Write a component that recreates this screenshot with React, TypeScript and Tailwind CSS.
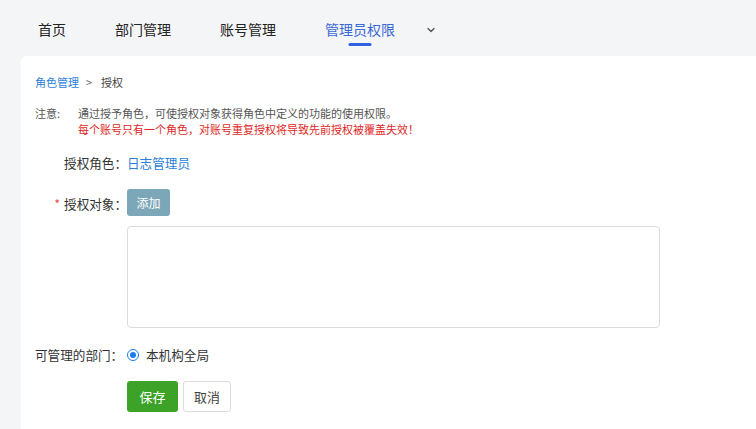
import React from 'react';

const font = { fontFamily: '"Noto Sans CJK SC", "Noto Sans", sans-serif' };

const navItems = ['首页', '部门管理', '账号管理', '管理员权限'];

const App: React.FC = () => {
  const active = 3;

  return (
    <div className="min-h-screen w-full bg-[#f4f5f7] flex flex-col" style={font}>
      {/* top tabs */}
      <nav className="h-[56px] shrink-0 flex items-center pl-[38px] text-[14px] text-[#222]">
        {navItems.map((item, i) => (
          <div
            key={item}
            className={`relative h-full flex items-center pt-[2px] ${i === navItems.length - 1 ? 'mr-[31px]' : 'mr-[49px]'}`}
          >
            <span className={i === active ? 'text-[#3a67d8]' : ''}>{item}</span>
            {i === active && (
              <span className="absolute left-1/2 -translate-x-1/2 top-[43px] w-[23px] h-[3px] bg-[#2f62e0] rounded-sm"></span>
            )}
          </div>
        ))}
        <svg width="10" height="10" viewBox="0 0 10 10" className="mt-[3px]">
          <path d="M2 3.5 L5 6.5 L8 3.5" fill="none" stroke="#555" strokeWidth="1.3" strokeLinecap="round" strokeLinejoin="round" />
        </svg>
      </nav>

      {/* content panel */}
      <div className="flex-1 ml-[21px] bg-white rounded-tl-[6px] pl-[14px] pt-[18px] pb-6">
        <div className="flex items-center text-[11px] text-[#444] h-[16px]">
          <span className="text-[#2b7fd8]">角色管理</span>
          <span className="ml-[7px] text-[#666]">&gt;</span>
          <span className="ml-[9px]">授权</span>
        </div>

        <div className="mt-[15px] flex text-[11px] leading-[16px]">
          <span className="w-[43px] text-[#555]">注意:</span>
          <div>
            <div className="text-[#555]">通过授予角色，可使授权对象获得角色中定义的功能的使用权限。</div>
            <div className="text-[#e0271f]">每个账号只有一个角色，对账号重复授权将导致先前授权被覆盖失效！</div>
          </div>
        </div>

        <div className="mt-[16px] flex items-center h-[20px] text-[12.6px]">
          <div className="w-[92px] text-right text-[#333]">授权角色：</div>
          <div className="text-[#2b7fd8]">日志管理员</div>
        </div>

        <div className="mt-[16px] flex items-start text-[12.6px]">
          <div className="w-[92px] text-right text-[#333] pt-[6px]">
            <span className="text-[#f04a4a] mr-[4px]">*</span>授权对象：
          </div>
          <div className="flex flex-col">
            <button className="w-[43px] h-[27px] rounded-[3px] bg-[#7ba7b8] text-white text-[12px]">添加</button>
            <div className="mt-[10px] w-[533px] h-[102px] border border-[#dcdcdc] rounded-[4px]"></div>
          </div>
        </div>

        <div className="mt-[17px] flex items-center h-[20px] text-[12.6px]">
          <div className="w-[92px] text-[#333]">可管理的部门：</div>
          <label className="flex items-center text-[#333]">
            <span className="w-[12px] h-[12px] rounded-full border border-[#1a7cf0] flex items-center justify-center">
              <span className="w-[6px] h-[6px] rounded-full bg-[#1a7cf0]"></span>
            </span>
            <span className="ml-[7px]">本机构全局</span>
          </label>
        </div>

        <div className="mt-[16px] flex pl-[92px] gap-[5px] text-[13px]">
          <button className="w-[51px] h-[31px] rounded-[3px] bg-[#3ca328] text-white">保存</button>
          <button className="w-[48px] h-[31px] rounded-[3px] bg-white border border-[#dcdcdc] text-[#444]">取消</button>
        </div>
      </div>
    </div>
  );
};

export default App;
